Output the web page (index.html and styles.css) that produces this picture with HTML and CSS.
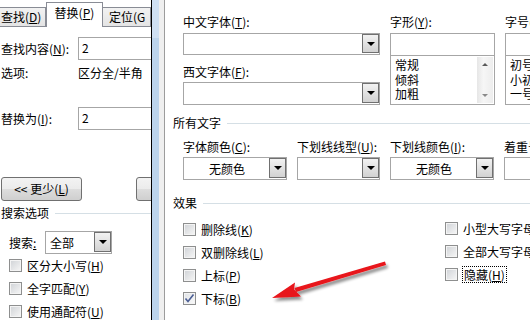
FILE: index.html
```html
<!DOCTYPE html>
<html lang="zh-CN">
<head>
<meta charset="utf-8">
<title>查找和替换 / 字体</title>
<link rel="stylesheet" href="styles.css">
</head>
<body>
<div class="page">
  <div class="find">
    <div class="tabs">
      <div class="tab t1">查找(<u>D</u>)</div>
      <div class="tab sel">替换(<u>P</u>)</div>
      <div class="tab t3">定位(G</div>
    </div>
    <div class="frow r1"><span class="flabel">查找内容(<u>N</u>):</span><div class="fin">2</div></div>
    <div class="frow r2"><span class="flabel">选项:</span><span>区分全/半角</span></div>
    <div class="frow r3"><span class="flabel">替换为(<u>I</u>):</span><div class="fin">2</div></div>
    <div class="btnrow"><div class="btn">&lt;&lt; 更少(<u>L</u>)</div><div class="btn b2"></div></div>
    <div class="sect fsect"><span>搜索选项</span><i class="rule"></i></div>
    <div class="srow"><span class="slabel">搜索<u>:</u></span><div class="combo fcombo"><span class="ctext">全部</span><span class="dd"><i class="tri"></i></span></div></div>
    <div class="chk fchk"><span class="box"></span><span>区分大小写(<u>H</u>)</span></div>
    <div class="chk fchk"><span class="box"></span><span>全字匹配(<u>Y</u>)</span></div>
    <div class="chk fchk"><span class="box"></span><span>使用通配符(<u>U</u>)</span></div>
  </div>
  <div class="strip"><div class="strip-top"></div></div>
  <div class="gap"></div>
  <div class="font">
    <div class="topgrid">
      <div class="col">
        <div class="lbl">中文字体(<u>T</u>):</div>
        <div class="combo wide"><span class="ctext"></span><span class="dd"><i class="tri"></i></span></div>
        <div class="lbl l2">西文字体(<u>F</u>):</div>
        <div class="combo wide c2"><span class="ctext"></span><span class="dd"><i class="tri"></i></span></div>
      </div>
      <div class="col">
        <div class="lbl">字形(<u>Y</u>):</div>
        <div class="tin"></div>
        <div class="list">
          <div class="items"><div>常规</div><div>倾斜</div><div>加粗</div></div>
          <div class="sbar"><i class="up"></i><i class="down"></i></div>
        </div>
      </div>
      <div class="col">
        <div class="lbl">字号(<u>S</u>):</div>
        <div class="tin"></div>
        <div class="list">
          <div class="items"><div>初号</div><div>小初</div><div>一号</div></div>
        </div>
      </div>
    </div>
    <div class="sect rsect s1"><span>所有文字</span><i class="rule"></i></div>
    <div class="colorgrid">
      <div class="lbl">字体颜色(<u>C</u>):</div>
      <div class="lbl">下划线线型(<u>U</u>):</div>
      <div class="lbl">下划线颜色(<u>I</u>):</div>
      <div class="lbl">着重号(·):</div>
      <div class="combo"><span class="ctext center">无颜色</span><span class="dd"><i class="tri"></i></span></div>
      <div class="combo"><span class="ctext"></span><span class="dd"><i class="tri"></i></span></div>
      <div class="combo"><span class="ctext center">无颜色</span><span class="dd"><i class="tri"></i></span></div>
      <div class="combo plain"></div>
    </div>
    <div class="sect rsect s2"><span>效果</span><i class="rule"></i></div>
    <div class="effects">
      <div class="ecol">
        <div class="chk"><span class="box"></span><span>删除线(<u>K</u>)</span></div>
        <div class="chk"><span class="box"></span><span>双删除线(<u>L</u>)</span></div>
        <div class="chk"><span class="box"></span><span>上标(<u>P</u>)</span></div>
        <div class="chk"><span class="box checked"><svg width="11" height="11" viewBox="0 0 11 11"><path d="M1.5 5.5 L4 8.5 L9.5 1.5" fill="none" stroke="#4b5e94" stroke-width="1.6"/></svg></span><span>下标(<u>B</u>)</span></div>
      </div>
      <div class="ecol">
        <div class="chk up1"><span class="box"></span><span>小型大写字母(<u>M</u>)</span></div>
        <div class="chk up1"><span class="box"></span><span>全部大写字母(<u>A</u>)</span></div>
        <div class="chk up1"><span class="box"></span><span class="focus">隐藏(<u>H</u>)</span></div>
      </div>
    </div>
  </div>
  <svg class="arrow" width="530" height="320" viewBox="0 0 530 320">
    <defs>
      <filter id="sh" x="-20%" y="-50%" width="140%" height="200%">
        <feGaussianBlur in="SourceAlpha" stdDeviation="1.6"/>
        <feOffset dx="2" dy="3" result="b"/>
        <feComponentTransfer><feFuncA type="linear" slope="0.45"/></feComponentTransfer>
        <feMerge><feMergeNode/><feMergeNode in="SourceGraphic"/></feMerge>
      </filter>
    </defs>
    <g filter="url(#sh)" fill="#e8141a">
      <path d="M385 261.5 L386 265 L296 292 L294.5 288 Z"/>
      <path d="M272 298 L295 282.5 L294 289.5 L301 296.5 Z"/>
    </g>
  </svg>
</div>
</body>
</html>
```
FILE: styles.css
```css
html, body {
  margin: 0;
  padding: 0;
  background: #ffffff;
}
body {
  width: 530px;
  height: 320px;
  overflow: hidden;
  font-family: "Noto Sans CJK SC", "Noto Sans", sans-serif;
  font-size: 12px;
  color: #000;
}
u { text-decoration: underline; text-underline-offset: 1px; }
.page {
  position: relative;
  display: flex;
  width: 530px;
  height: 320px;
  overflow: hidden;
}

/* ---------- left: find/replace ---------- */
.find {
  width: 151px;
  flex: none;
  border-right: 1px solid #000;
  background: #fff;
  overflow: hidden;
  white-space: nowrap;
}
.tabs {
  display: flex;
  align-items: flex-end;
  height: 27px;
  box-sizing: border-box;
  border-bottom: 1px solid #898c95;
}
.tab {
  box-sizing: border-box;
  height: 19px;
  line-height: 17px;
  border: 1px solid #898c95;
  border-bottom: none;
  background: linear-gradient(#f2f2f2, #e4e4e4);
}
.t1 { width: 48px; border-left: none; padding-left: 1px; }
.sel {
  width: 60px;
  height: 25px;
  margin-bottom: -1px;
  background: #fff;
  text-align: center;
  line-height: 20px;
  border-left: 1px solid #898c95;
}
.t3 { width: 50px; border-left: none; padding-left: 6px; }
.frow {
  display: flex;
  align-items: center;
}
.flabel { width: 77px; flex: none; padding-left: 1px; }
.r1 { margin-top: 10px; height: 23px; }
.r2 { margin-top: 3px; height: 18px; }
.r3 { margin-top: 26px; height: 23px; }
.fin {
  flex: none;
  width: 100px;
  height: 23px;
  box-sizing: border-box;
  border: 1px solid #a6a6a6;
  padding-left: 3px;
  line-height: 19px;
}
.btnrow {
  display: flex;
  gap: 54px;
  margin-top: 47px;
  padding-left: 1px;
}
.btn {
  width: 81px;
  height: 24px;
  box-sizing: border-box;
  border: 1px solid #707070;
  border-radius: 3px;
  background: linear-gradient(#f3f3f3 0%, #ebebeb 50%, #dddddd 51%, #cfcfcf 100%);
  text-align: center;
  line-height: 21px;
  flex: none;
}
.b2 { width: 40px; }
.sect {
  display: flex;
  align-items: center;
  gap: 6px;
  line-height: 16px;
}
.rule {
  flex: 1;
  height: 1px;
  background: #d5dfe5;
  margin-top: 1px;
}
.fsect { margin-top: 4px; padding-left: 1px; }
.srow {
  display: flex;
  align-items: center;
  margin-top: 10px;
  padding-left: 9px;
  height: 23px;
}
.slabel { width: 36px; }
.combo {
  display: flex;
  height: 23px;
  box-sizing: border-box;
  border: 1px solid #a6a6a6;
  background: #fff;
  padding: 1px;
}
.fcombo { width: 67px; }
.ctext {
  flex: 1;
  line-height: 19px;
  padding-left: 3px;
}
.ctext.center { text-align: center; padding-left: 0; }
.dd {
  width: 17px;
  flex: none;
  box-sizing: border-box;
  border: 1px solid #707070;
  background: linear-gradient(#f2f2f2, #d2d2d2);
  display: flex;
  align-items: center;
  justify-content: center;
  margin: -1px -1px 0 0;
}
.tri {
  width: 0;
  height: 0;
  border-left: 4px solid transparent;
  border-right: 4px solid transparent;
  border-top: 4px solid #000;
}
.chk {
  display: flex;
  align-items: center;
  gap: 5px;
  height: 23px;
  white-space: nowrap;
}
.fchk { padding-left: 9px; }
.fchk:first-of-type { margin-top: 3px; }
.box {
  width: 13px;
  height: 13px;
  box-sizing: border-box;
  flex: none;
  border: 1px solid #8e8f8f;
  background: linear-gradient(135deg, #cfd2d6, #f7f7f7);
  box-shadow: inset 0 0 0 1px #f4f4f4;
  display: flex;
  align-items: center;
  justify-content: center;
}
.box.checked {
  background: linear-gradient(135deg, #dfe2e6, #fafafa);
}

/* ---------- middle strip ---------- */
.strip {
  width: 7px;
  flex: none;
  background: #bcd4ec;
}
.strip-top {
  height: 38px;
  background: #cfe0f3;
}
.gap {
  width: 5px;
  flex: none;
  background: #efefef;
  border-right: 1px solid #9c9c9c;
}

/* ---------- right: font dialog ---------- */
.font {
  flex: 1;
  background: #fff;
  overflow: hidden;
  white-space: nowrap;
}
.topgrid {
  display: grid;
  grid-template-columns: 197px 105px 105px;
  column-gap: 10px;
  padding: 14px 0 0 18px;
}
.col { display: flex; flex-direction: column; }
.lbl { line-height: 16px; }
.col .lbl { margin-bottom: 3px; }
.col .l2 { margin-top: 9px; margin-bottom: 2px; }
.wide { width: 197px; height: 22px; }
.c2 { height: 23px; }
.tin {
  height: 23px;
  box-sizing: border-box;
  border: 1px solid #a6a6a6;
}
.list {
  display: flex;
  height: 49px;
  box-sizing: border-box;
  border: 1px solid #a6a6a6;
  border-top: none;
}
.items {
  flex: 1;
  padding: 2px 0 0 4px;
  line-height: 14.5px;
}
.sbar {
  width: 16px;
  margin: 1px 1px 1px 0;
  background: linear-gradient(90deg, #e6e6e6, #f6f6f6 40%, #ededed);
  display: flex;
  flex-direction: column;
  justify-content: space-between;
  align-items: center;
  padding: 6px 0 6px;
  box-sizing: border-box;
}
.up, .down {
  width: 0;
  height: 0;
  border-left: 3px solid transparent;
  border-right: 3px solid transparent;
}
.up { border-bottom: 3px solid #5a5a5a; }
.down { border-top: 3px solid #8a8a8a; }
.rsect { padding-left: 8px; }
.s1 { margin-top: 10px; }
.colorgrid {
  display: grid;
  grid-template-columns: 104px 83px 104px 104px;
  column-gap: 10px;
  row-gap: 2px;
  padding-left: 18px;
  margin-top: 8px;
}
.plain { padding: 0; }
.s2 { margin-top: 15px; }
.effects {
  display: grid;
  grid-template-columns: 262px 120px;
  padding-left: 18px;
  margin-top: 7px;
}
.up1 { position: relative; top: -1px; }
.focus {
  outline: 1px dotted #000;
  outline-offset: 0px;
  padding: 0 1px;
  line-height: 15px;
}

/* ---------- overlay arrow ---------- */
.arrow {
  position: absolute;
  left: 0;
  top: 0;
  pointer-events: none;
}
```
